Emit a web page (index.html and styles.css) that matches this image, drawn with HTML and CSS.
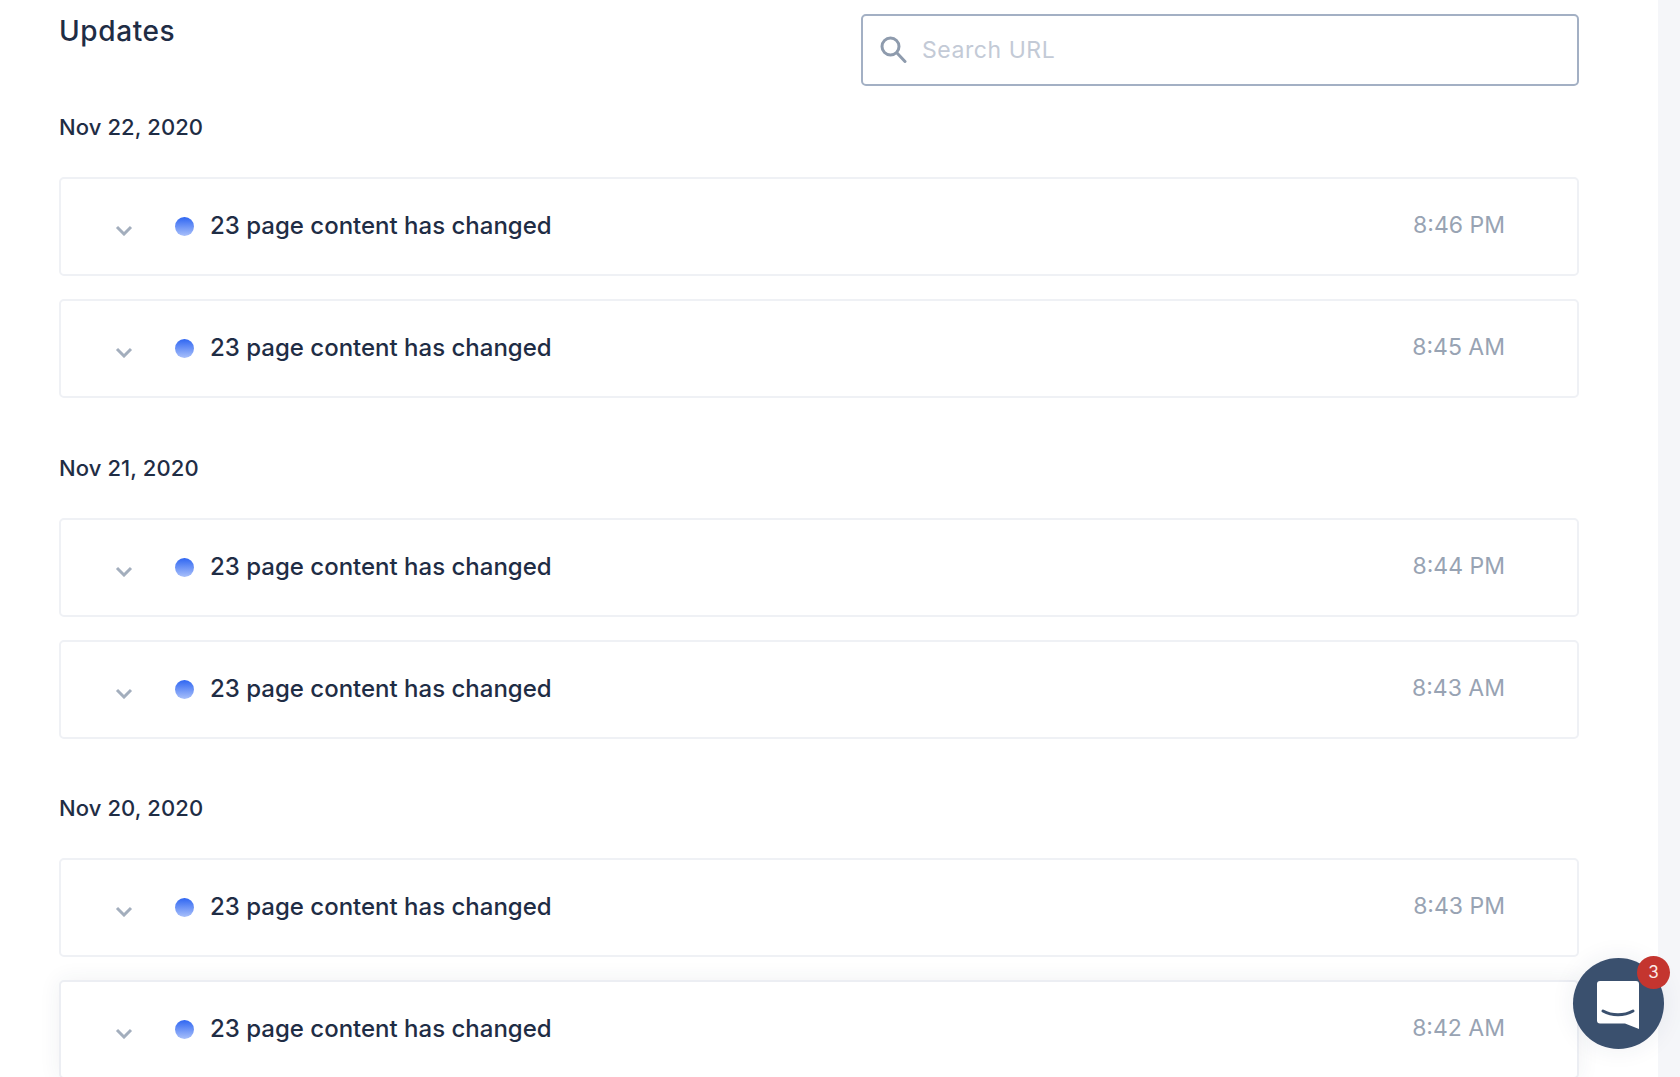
FILE: index.html
```html
<!DOCTYPE html>
<html lang="en">
<head>
<meta charset="utf-8">
<title>Updates</title>
<link rel="stylesheet" href="styles.css">
</head>
<body>
<div class="page">
  <main class="main">
    <header class="top">
      <h1 class="title">Updates</h1>
      <label class="search">
        <svg class="search-icon" viewBox="0 0 28 28" aria-hidden="true"><circle cx="11.5" cy="11.5" r="8.5"/><path d="M18 18l8 8.500"/></svg>
        <span class="placeholder">Search URL</span>
      </label>
    </header>

    <section class="group">
      <h2 class="date">Nov 22, 2020</h2>
      <div class="card"><svg class="chev" viewBox="0 0 18 11"><path d="M2 2l7 7 7-7"/></svg><i class="dot"></i><span class="msg">23 page content has changed</span><span class="time">8:46 PM</span></div>
      <div class="card"><svg class="chev" viewBox="0 0 18 11"><path d="M2 2l7 7 7-7"/></svg><i class="dot"></i><span class="msg">23 page content has changed</span><span class="time">8:45 AM</span></div>
    </section>

    <section class="group">
      <h2 class="date">Nov 21, 2020</h2>
      <div class="card"><svg class="chev" viewBox="0 0 18 11"><path d="M2 2l7 7 7-7"/></svg><i class="dot"></i><span class="msg">23 page content has changed</span><span class="time">8:44 PM</span></div>
      <div class="card"><svg class="chev" viewBox="0 0 18 11"><path d="M2 2l7 7 7-7"/></svg><i class="dot"></i><span class="msg">23 page content has changed</span><span class="time">8:43 AM</span></div>
    </section>

    <section class="group">
      <h2 class="date">Nov 20, 2020</h2>
      <div class="card"><svg class="chev" viewBox="0 0 18 11"><path d="M2 2l7 7 7-7"/></svg><i class="dot"></i><span class="msg">23 page content has changed</span><span class="time">8:43 PM</span></div>
      <div class="card card-hover"><svg class="chev" viewBox="0 0 18 11"><path d="M2 2l7 7 7-7"/></svg><i class="dot"></i><span class="msg">23 page content has changed</span><span class="time">8:42 AM</span></div>
    </section>
  </main>
  <aside class="strip"></aside>
</div>

<button class="chat" type="button" aria-label="Chat">
  <svg class="chat-icon" viewBox="0 0 44 50" aria-hidden="true">
    <path class="bubble" d="M4 1h36a3 3 0 0 1 3 3v45l-14-5.500H4a3 3 0 0 1-3-3V4a3 3 0 0 1 3-3z"/>
    <path class="smile" d="M7 31c9 5 21 5 30 0"/>
  </svg>
  <span class="badge">3</span>
</button>
</body>
</html>
```

FILE: styles.css
```css
* { box-sizing: border-box; }
html, body { margin: 0; height: 100%; overflow: hidden; }
body { background: #fff; font-family: "Inter", "Noto Sans", sans-serif; color: #1f2d45; }

.page { display: flex; height: 1077px; overflow: hidden; }
.main { flex: 1; padding: 14px 79px 0 59px; min-width: 0; }
.strip { width: 22px; background: #f5f6f9; flex: none; }

.top { display: flex; justify-content: space-between; align-items: flex-start; height: 71px; }
.title { margin: 0; font-size: 28px; font-weight: 500; line-height: 34px; letter-spacing: .6px; }

.search { width: 718px; height: 72px; border: 2px solid #a3b0c4; border-radius: 5px; display: flex; align-items: center; padding-left: 16px; gap: 15px; background: #fff; }
.search-icon { width: 28px; height: 28px; margin-top: -2px; fill: none; stroke: #8e9bad; stroke-width: 3; stroke-linecap: round; }
.placeholder { font-size: 23px; color: #c3cad6; letter-spacing: .55px; }

.group { display: flex; flex-direction: column; gap: 24px; }
.group + .group { margin-top: 55.5px; }
.group:first-of-type { margin-top: 28px; }
.date { margin: -1px 0 11px; font-size: 22px; font-weight: 500; line-height: 30px; height: 30px; letter-spacing: .1px; }

.card { height: 99px; border: 2px solid #eff1f5; border-radius: 5px; background: #fff; display: flex; align-items: center; padding: 0 72px 0 54px; }
.card + .card { margin-top: -1px; }
.card-hover { border-color: #eceef3; box-shadow: 0 0 22px rgba(40, 55, 90, .07); }

.chev { width: 18px; height: 11px; margin-top: 8px; fill: none; stroke: #a3aebd; stroke-width: 3; flex: none; }
.dot { width: 19px; height: 19px; border-radius: 50%; margin-left: 42px; background: linear-gradient(#2f66f2, #a9c0fa); flex: none; }
.msg { margin-left: 16px; margin-top: -1px; font-size: 24px; font-weight: 500; line-height: 30px; }
.time { margin-left: auto; margin-top: -3px; font-size: 23px; color: #98a3b3; line-height: 30px; }

.chat { position: fixed; left: 1573px; top: 958px; width: 91px; height: 91px; border: 0; padding: 0; border-radius: 50%; background: #3a506e; display: flex; align-items: center; justify-content: center; box-shadow: 0 0 24px rgba(40, 55, 90, .08); }
.chat-icon { width: 44px; height: 50px; margin: 2px 2px 0 0; }
.bubble { fill: #fff; }
.smile { fill: none; stroke: #3a506e; stroke-width: 3; stroke-linecap: round; }
.badge { position: absolute; left: 64px; top: -2px; width: 33px; height: 33px; border-radius: 50%; background: #c4352f; color: #fbe9e7; font: 400 17px/33px "Inter", sans-serif; text-align: center; }
```
